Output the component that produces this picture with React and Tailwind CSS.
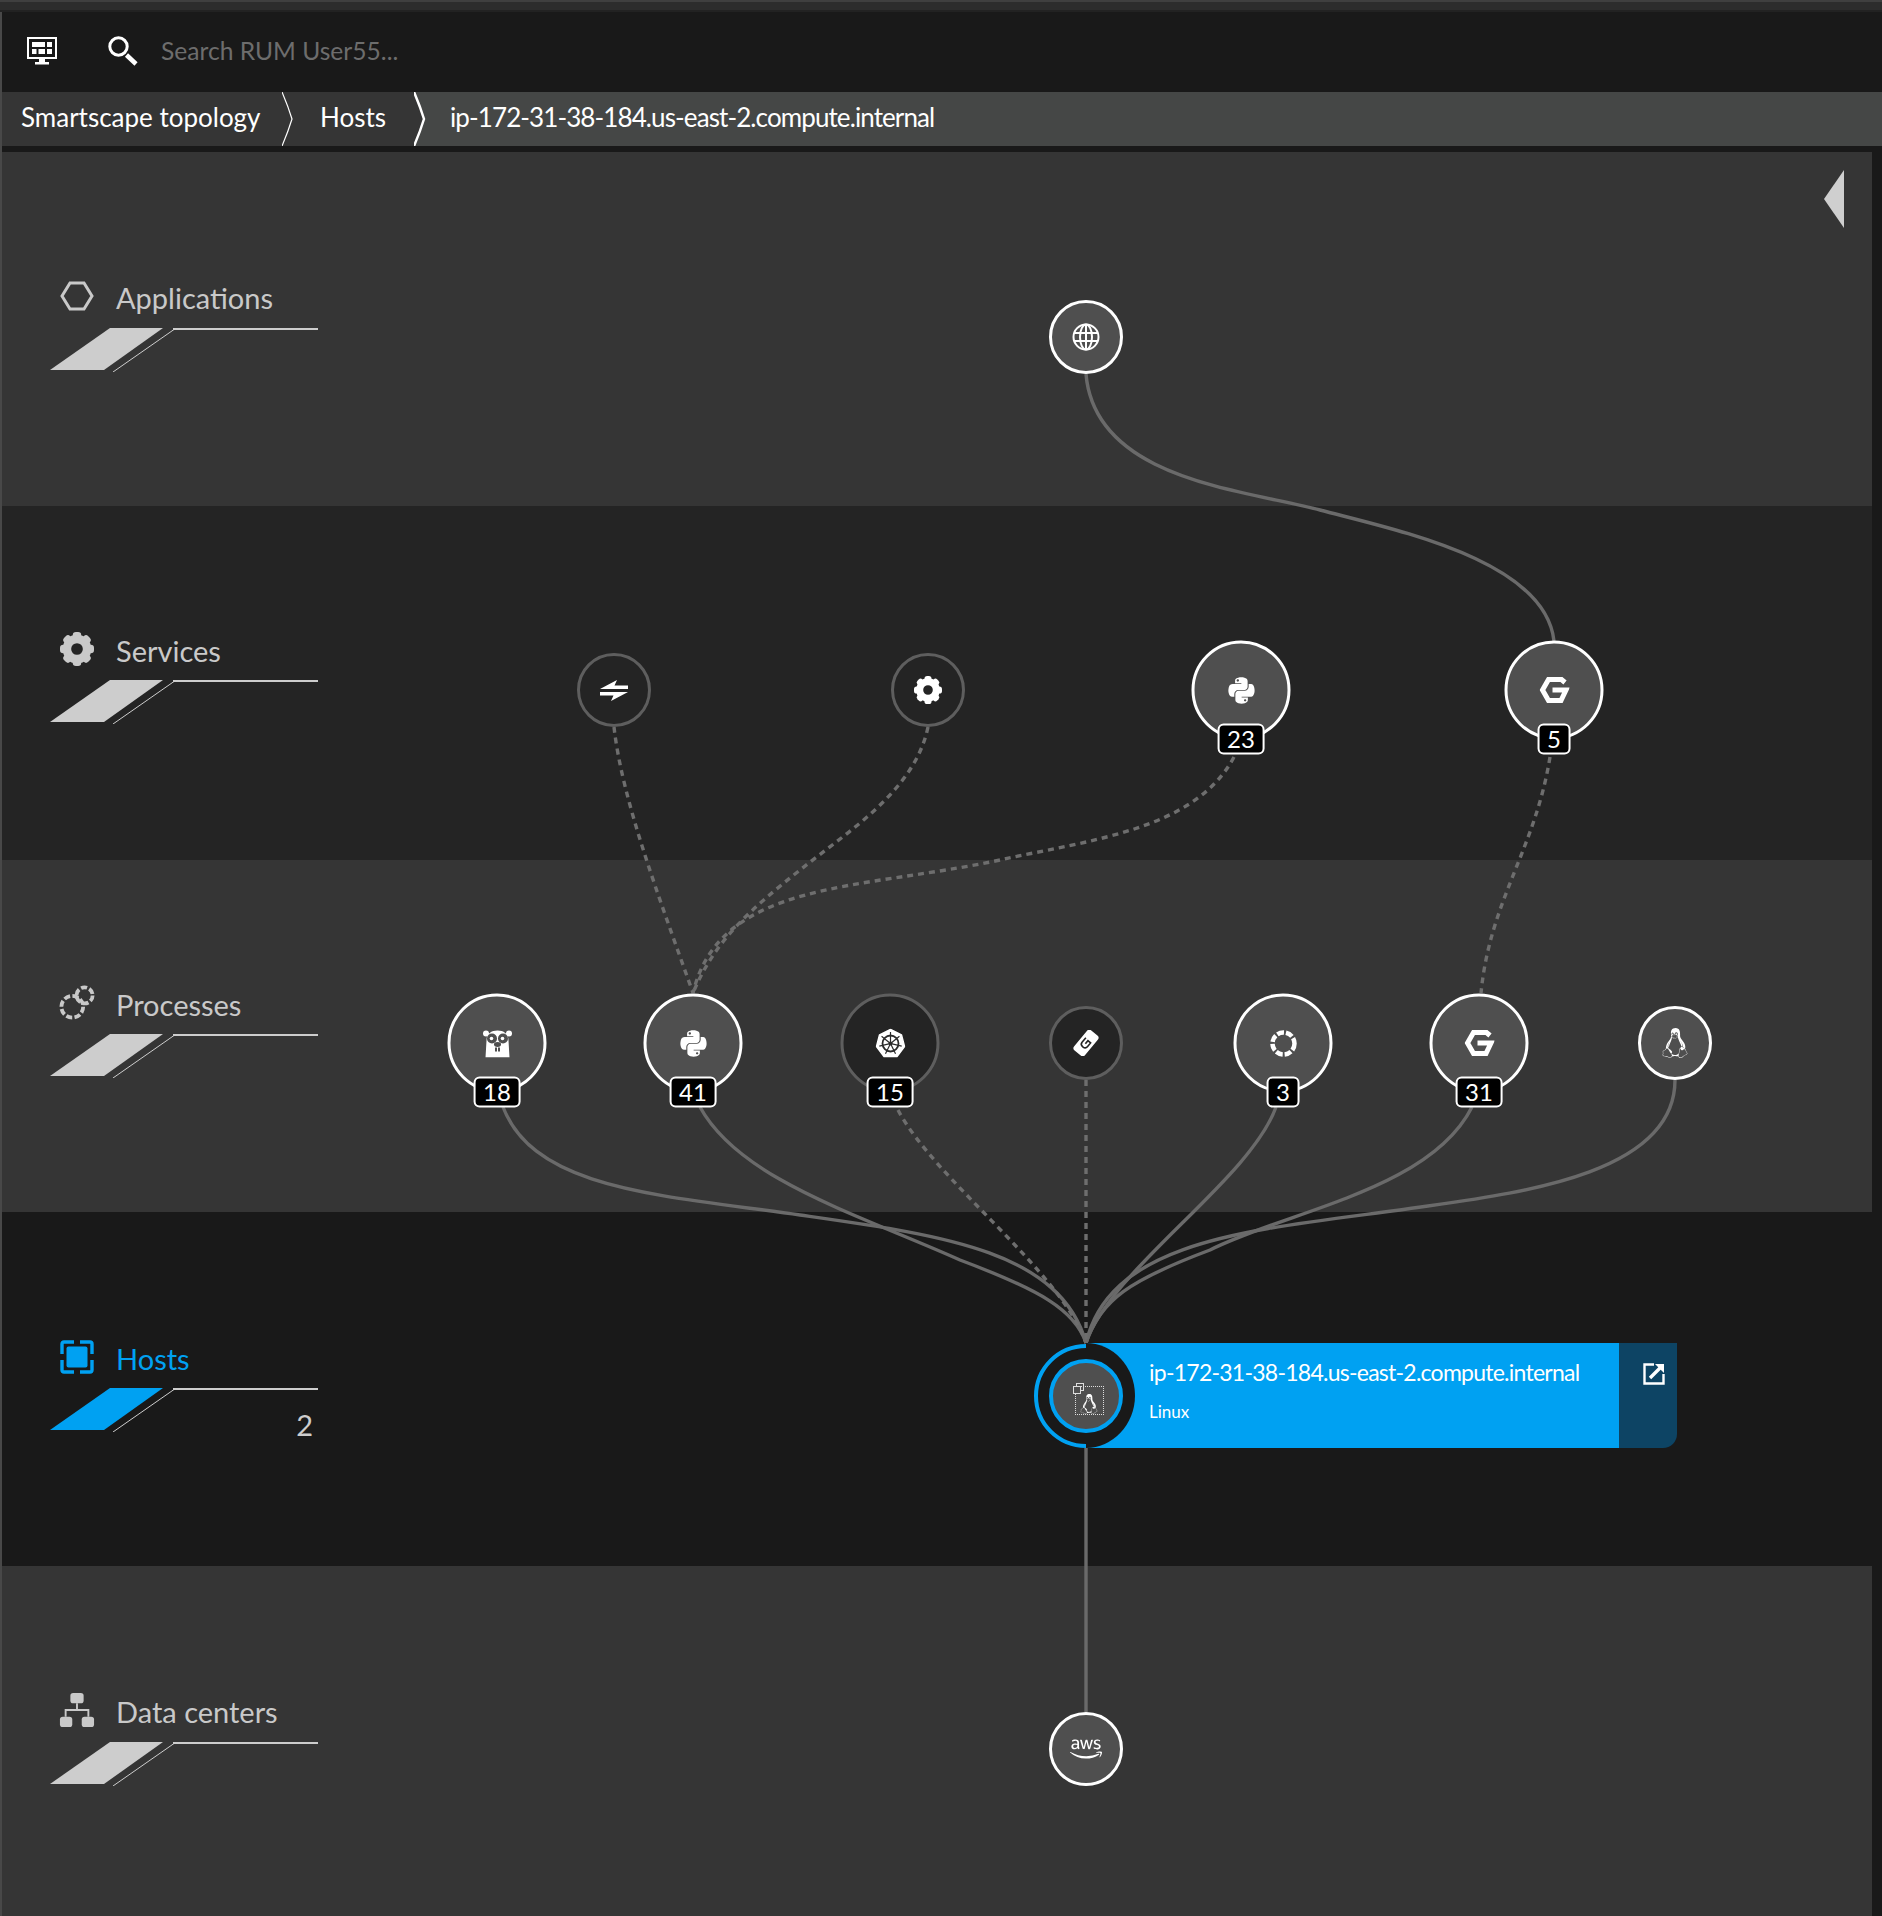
import React from "react";
import { FaPython, FaLinux, FaAws } from "react-icons/fa";

const fontFamily = "font-['Lato','Noto_Sans',sans-serif]";

const solidEdges = [
  "M1086 374 C1095 480 1245 490 1320 510 C1395 530 1545 560 1554 641",
  "M503 1107 C535 1190 660 1195 800 1215 C940 1235 1060 1250 1086 1343",
  "M700 1107 C740 1180 860 1215 960 1260 C1040 1290 1075 1310 1086 1343",
  "M1276 1107 C1250 1180 1110 1270 1086 1343",
  "M1472 1107 C1430 1190 1290 1210 1210 1250 C1130 1280 1100 1300 1086 1343",
  "M1675 1080 C1675 1180 1500 1195 1400 1210 C1250 1230 1110 1240 1086 1343",
  "M1086 1448 V1712",
];

const dashedEdges = [
  "M614 727 C622 800 660 900 693 993",
  "M928 727 C915 790 850 830 800 870 C750 910 715 940 693 993",
  "M1234 757 C1195 830 1090 840 1000 860 C860 890 720 880 693 993",
  "M1550 757 C1535 850 1490 900 1481 993",
  "M898 1110 C935 1180 1060 1270 1086 1343",
  "M1086 1080 V1343",
];

function Gear({ className, size = 26 }) {
  return (
    <svg viewBox="0 0 32 32" width={size} height={size} className={className} fill="currentColor">
      <circle cx="16" cy="16" r="9.5" fill="none" stroke="currentColor" strokeWidth="8" />
      {[0, 45, 90, 135, 180, 225, 270, 315].map((a) => (
        <rect key={a} x="12" y="0" width="8" height="6" rx="3" transform={`rotate(${a} 16 16)`} />
      ))}
    </svg>
  );
}

function NginxG({ size = 30 }) {
  return (
    <svg viewBox="0 0 30 27" width={size} height={size * 0.9} fill="none" stroke="currentColor" strokeWidth="5">
      <path d="M25.5 6 L22 3 H9 L3 13.5 L9 24 H21.5 L26.5 13.5 H13" />
    </svg>
  );
}

function Gopher() {
  return (
    <svg viewBox="0 0 30 28" width="30" height="28">
      <path d="M4 11 C4 4 9 1 15 1 C21 1 26 4 26 11 L27 28 H3 Z" fill="#fff" />
      <circle cx="3.5" cy="4" r="3" fill="#fff" />
      <circle cx="26.5" cy="4" r="3" fill="#fff" />
      <circle cx="9.5" cy="9" r="5" fill="#4f4f4f" />
      <circle cx="20.5" cy="9" r="5" fill="#4f4f4f" />
      <circle cx="9" cy="9" r="1.8" fill="#fff" />
      <circle cx="20" cy="9" r="1.8" fill="#fff" />
      <ellipse cx="15" cy="15" rx="3.5" ry="2.4" fill="#4f4f4f" />
      <rect x="12.5" y="18" width="2" height="4" fill="#4f4f4f" />
      <rect x="15.5" y="18" width="2" height="4" fill="#4f4f4f" />
    </svg>
  );
}

function Kube() {
  return (
    <svg viewBox="0 0 30 30" width="30" height="30">
      <path d="M15 1 L26 6.5 L29 18 L21.5 28 H8.5 L1 18 L4 6.5 Z" fill="#fff" stroke="#fff" strokeWidth="1.5" strokeLinejoin="round" />
      <circle cx="15" cy="15" r="8" fill="none" stroke="#2b2b2b" strokeWidth="1.8" />
      <circle cx="15" cy="15" r="2" fill="#2b2b2b" />
      {[0, 51, 103, 154, 206, 257, 309].map((a) => (
        <rect key={a} x="14.4" y="3.5" width="1.2" height="11" fill="#2b2b2b" transform={`rotate(${a} 15 15)`} />
      ))}
    </svg>
  );
}

function ChainG() {
  return (
    <svg viewBox="0 0 26 26" width="26" height="26">
      <g transform="rotate(-50 13 13)">
        <rect x="0" y="6" width="26" height="14" rx="3" fill="#fff" />
        <path d="M17 9.5 H11 Q8 9.5 8 13 Q8 16.5 11 16.5 H16 V13 H12" fill="none" stroke="#242424" strokeWidth="1.6" />
      </g>
    </svg>
  );
}

function Balancer() {
  return (
    <svg viewBox="0 0 30 21" width="30" height="21" fill="#fff">
      <polygon points="1,9 18,0 15.5,5.5 29,5.5 29,9" />
      <polygon points="29,12 12,21 14.5,15.5 1,15.5 1,12" />
    </svg>
  );
}

function Globe() {
  return (
    <svg viewBox="0 0 28 28" width="28" height="28" fill="none" stroke="#fff" strokeWidth="2">
      <circle cx="14" cy="14" r="12.5" />
      <ellipse cx="14" cy="14" rx="6" ry="12.5" />
      <path d="M2 10 H26 M2 18 H26 M14 1.5 V26.5" />
    </svg>
  );
}

function Ring() {
  return (
    <svg viewBox="0 0 28 28" width="28" height="28" fill="none" stroke="#fff" strokeWidth="4.5">
      <circle cx="14" cy="14" r="11" strokeDasharray="7 2" />
    </svg>
  );
}

const nodes = [
  { x: 1086, y: 337, r: "small", on: true, icon: <Globe /> },
  { x: 614, y: 690, r: "small", icon: <Balancer /> },
  { x: 928, y: 690, r: "small", icon: <Gear size={28} className="text-white" /> },
  { x: 1241, y: 690, r: "big", on: true, count: 23, icon: <FaPython size={30} color="#fff" /> },
  { x: 1554, y: 690, r: "big", on: true, count: 5, icon: <NginxG /> },
  { x: 497, y: 1043, r: "big", on: true, count: 18, icon: <Gopher /> },
  { x: 693, y: 1043, r: "big", on: true, count: 41, icon: <FaPython size={30} color="#fff" /> },
  { x: 890, y: 1043, r: "big", count: 15, icon: <Kube /> },
  { x: 1086, y: 1043, r: "small", icon: <ChainG /> },
  { x: 1283, y: 1043, r: "big", on: true, count: 3, icon: <Ring /> },
  { x: 1479, y: 1043, r: "big", on: true, count: 31, icon: <NginxG /> },
  { x: 1675, y: 1043, r: "small", on: true, icon: <FaLinux size={30} color="#fff" /> },
  { x: 1086, y: 1749, r: "small", on: true, icon: <FaAws size={32} color="#fff" /> },
];

function Node({ x, y, r, on, count, icon }) {
  return (
    <div
      style={{ left: x, top: y }}
      className={`absolute -translate-x-1/2 -translate-y-1/2 rounded-full border-[3px] flex items-center justify-center text-white ${
        r === "big" ? "w-[99px] h-[99px]" : "w-[74px] h-[74px]"
      } ${on ? "border-white bg-[#4f4f4f]" : "border-[#5e5e5e] bg-[#242424]"}`}
    >
      {icon}
      {count !== undefined && (
        <span className="absolute left-1/2 top-[80px] -translate-x-1/2 h-[31px] min-w-[32px] px-[8px] rounded-[6px] border-2 border-white bg-black text-white text-[24px] leading-[26px] text-center">
          {count}
        </span>
      )}
    </div>
  );
}

function Slash({ active }) {
  return (
    <svg viewBox="0 0 270 44" width="270" height="44" className="block">
      <polygon points="60,0 113,0 54,42 0,42" fill={active ? "#00a1f2" : "#cdcdcd"} />
      <path d="M63 44 L124 1.5" stroke="#cdcdcd" strokeWidth="1" fill="none" />
      <path d="M123 1 H268" stroke="#cdcdcd" strokeWidth="2" fill="none" />
    </svg>
  );
}

function Layer({ name, icon, tone, pad, gap, iconShift, active, count }) {
  return (
    <section className={`flex-none flex flex-col pl-[48px] ${tone} ${pad}`}>
      <div className={`h-[40px] flex items-center gap-[21px] ml-[9px] ${active ? "text-[#00a1f2]" : "text-[#c9c9c9]"}`}>
        <span className={`w-[36px] flex justify-center ${iconShift}`}>{icon}</span>
        <span className="text-[29px] leading-none">{name}</span>
      </div>
      <div className={gap}>
        <Slash active={active} />
        {count && <div className="-mt-[24px] w-[263px] text-right text-[29px] leading-[34px] text-[#cdcdcd]">{count}</div>}
      </div>
    </section>
  );
}

function Crumb({ fill, next, bold }) {
  return (
    <svg viewBox="0 0 12 54" width="12" height="54" className="flex-none block">
      <rect width="12" height="54" fill={fill} />
      <path d="M0 0 Q6 14 10 27 Q6 40 0 54 H12 V0 Z" fill={next} />
      <path d="M0 0 Q6 14 10 27 Q6 40 0 54" fill="none" stroke="#fff" strokeWidth={bold ? 2.5 : 1.2} />
    </svg>
  );
}

export default function App() {
  return (
    <div className={`relative w-[1882px] h-[1916px] overflow-hidden bg-[#191919] ${fontFamily}`}>
      <div className="h-[2px] bg-[#3f3f3f]" />
      <div className="h-[8px] bg-[#2c2c2c]" />
      <div className="h-[2px] bg-[#222]" />
      <div className="flex h-[1904px]">
        <div className="w-[2px] flex-none bg-[#484848]" />
        <div className="flex-1 flex flex-col">
          <div className="h-[80px] flex items-center">
            <svg viewBox="0 0 30 28" width="30" height="28" className="ml-[25px] -mt-[2px]" fill="#fff">
              <path fillRule="evenodd" d="M0 0 H30 V22 H18 V25 H22 V27.5 H8 V25 H12 V22 H0 Z M2 2 V20 H28 V2 Z" />
              <path d="M5 5 H18 V10 H5 Z M20 5 H25 V10 H20 Z M5 12 H9.5 V17 H5 Z M11.5 12 H18 V17 H11.5 Z M20 12 H25 V17 H20 Z" />
            </svg>
            <svg viewBox="0 0 30 30" width="30" height="30" className="ml-[51px] -mt-[2px]" fill="none" stroke="#fff">
              <circle cx="10.5" cy="10.5" r="8.7" strokeWidth="3" />
              <path d="M18.5 19 L28 28" strokeWidth="4.5" />
            </svg>
            <span className="ml-[23px] -mt-[2px] text-[24.6px] text-[#6d6d6d]">Search RUM User55...</span>
          </div>
          <nav className="h-[54px] flex items-stretch text-white text-[26px]">
            <div className="w-[280px] pl-[19px] pb-[4px] flex items-center bg-[#353535]">Smartscape topology</div>
            <Crumb fill="#353535" next="#353535" />
            <div className="w-[120px] pl-[26px] pb-[4px] flex items-center bg-[#353535]">Hosts</div>
            <Crumb fill="#353535" next="#454746" bold />
            <div className="flex-1 pl-[24px] pb-[4px] flex items-center bg-[#454746] tracking-[-0.9px]">ip-172-31-38-184.us-east-2.compute.internal</div>
          </nav>
          <div className="h-[6px]" />
          <div className="mr-[10px] flex flex-col">
            <Layer
              name="Applications"
              tone="bg-[#353535] h-[354px]"
              pad="pt-[125px]"
              gap="mt-[11px]"
              iconShift="-mt-[2px]"
              icon={
                <svg viewBox="0 0 34 30" width="34" height="30" fill="none" stroke="currentColor" strokeWidth="3">
                  <path d="M2 15 L10 2 H24 L32 15 L24 28 H10 Z" />
                </svg>
              }
            />
            <Layer name="Services" tone="bg-[#242424] h-[354px]" pad="pt-[124px]" gap="mt-[10px]" iconShift="-mt-[2px]" icon={<Gear size={34} />} />
            <Layer
              name="Processes"
              tone="bg-[#353535] h-[352px]"
              pad="pt-[124px]"
              gap="mt-[10px]"
              iconShift="-mt-[2px]"
              icon={
                <svg viewBox="0 0 38 38" width="38" height="38" fill="none" stroke="currentColor" strokeWidth="4">
                  <circle cx="14" cy="23" r="11.5" strokeDasharray="6.5 2.5" />
                  <circle cx="27" cy="11" r="8.5" strokeDasharray="6.5 2.5" />
                </svg>
              }
            />
            <Layer
              name="Hosts"
              active
              count="2"
              tone="bg-[#191919] h-[354px]"
              pad="pt-[126px]"
              gap="mt-[10px]"
              iconShift="-mt-[2px]"
              icon={
                <svg viewBox="0 0 34 34" width="34" height="34" fill="none" stroke="currentColor" strokeWidth="3.4">
                  <path d="M14 2 H4 Q2 2 2 4 V14 M20 2 H30 Q32 2 32 4 V14 M32 20 V30 Q32 32 30 32 H20 M14 32 H4 Q2 32 2 30 V20" />
                  <rect x="6.5" y="6.5" width="21" height="21" rx="2" fill="currentColor" stroke="none" />
                </svg>
              }
            />
            <Layer
              name="Data centers"
              tone="bg-[#353535] h-[350px]"
              pad="pt-[125px]"
              gap="mt-[11px]"
              iconShift="-mt-[3px]"
              icon={
                <svg viewBox="0 0 38 38" width="38" height="38" fill="currentColor">
                  <rect x="12" y="1" width="14" height="11" rx="3" />
                  <rect x="1" y="26" width="13" height="11" rx="3" />
                  <rect x="24" y="26" width="13" height="11" rx="3" />
                  <path d="M18 12 H20 V18 H32 V26 H30 V20 H8 V26 H6 V18 H18 Z" />
                </svg>
              }
            />
          </div>
        </div>
      </div>

      {/* collapse arrow */}
      <svg viewBox="0 0 20 58" width="20" height="58" className="absolute left-[1824px] top-[170px]">
        <polygon points="20,0 20,58 0,29" fill="#cfcfcf" />
      </svg>

      {/* topology links */}
      <svg viewBox="0 0 1882 1916" width="1882" height="1916" className="absolute left-0 top-0" fill="none">
        {solidEdges.map((d) => (
          <path key={d} d={d} stroke="#6a6a6a" strokeWidth="3.4" />
        ))}
        {dashedEdges.map((d) => (
          <path key={d} d={d} stroke="#6e6e6e" strokeWidth="3.4" strokeDasharray="6 5" />
        ))}
      </svg>

      {nodes.map((n) => (
        <Node key={`${n.x}-${n.y}`} {...n} />
      ))}

      {/* selected host */}
      <div className="absolute left-[1086px] top-[1343px] w-[591px] h-[105px] flex rounded-br-[14px] overflow-hidden text-white">
        <div className="flex-1 bg-[#00a1f2] pl-[63px] pt-[13px]">
          <div className="text-[23px] leading-[32px] tracking-[-0.75px]">ip-172-31-38-184.us-east-2.compute.internal</div>
          <div className="text-[17px] leading-[24px] mt-[12px]">Linux</div>
        </div>
        <div className="w-[58px] flex-none bg-[#0d4464] pl-[24px] pt-[20px]">
          <svg viewBox="0 0 22 22" width="22" height="22" fill="none" stroke="#fff" strokeWidth="2.4">
            <path d="M11 1.5 H1.5 V20.5 H20.5 V11" />
            <path d="M7 15 L18 4" strokeWidth="3.4" />
            <path d="M12 1 H21 V10 Z" fill="#fff" stroke="none" />
          </svg>
        </div>
      </div>
      <div className="absolute left-[1034px] top-[1344px] w-[104px] h-[104px] rounded-full bg-[#191919] border-[4px] border-[#00a1f2]" />
      <div className="absolute left-[1086px] top-[1343px] w-[49px] h-[105px] [border-radius:0_49px_49px_0/0_52.5px_52.5px_0] bg-[#191919]" />
      <div className="absolute left-[1049px] top-[1359px] w-[74px] h-[74px] rounded-full bg-[#4f4f4f] border-[4px] border-[#00a1f2] flex items-center justify-center">
        <div className="relative w-[29px] h-[29px] mt-[8px] ml-[6px] border border-dotted border-[#ddd] flex items-end justify-center">
          <FaLinux size={20} color="#fff" />
          <svg viewBox="0 0 12 12" width="12" height="12" className="absolute -left-[3px] -top-[4px]" fill="none" stroke="#ddd" strokeWidth="1">
            <rect x="3.5" y="0.5" width="7" height="7" />
            <rect x="0.5" y="3.5" width="7" height="7" fill="#4f4f4f" />
          </svg>
        </div>
      </div>
    </div>
  );
}
